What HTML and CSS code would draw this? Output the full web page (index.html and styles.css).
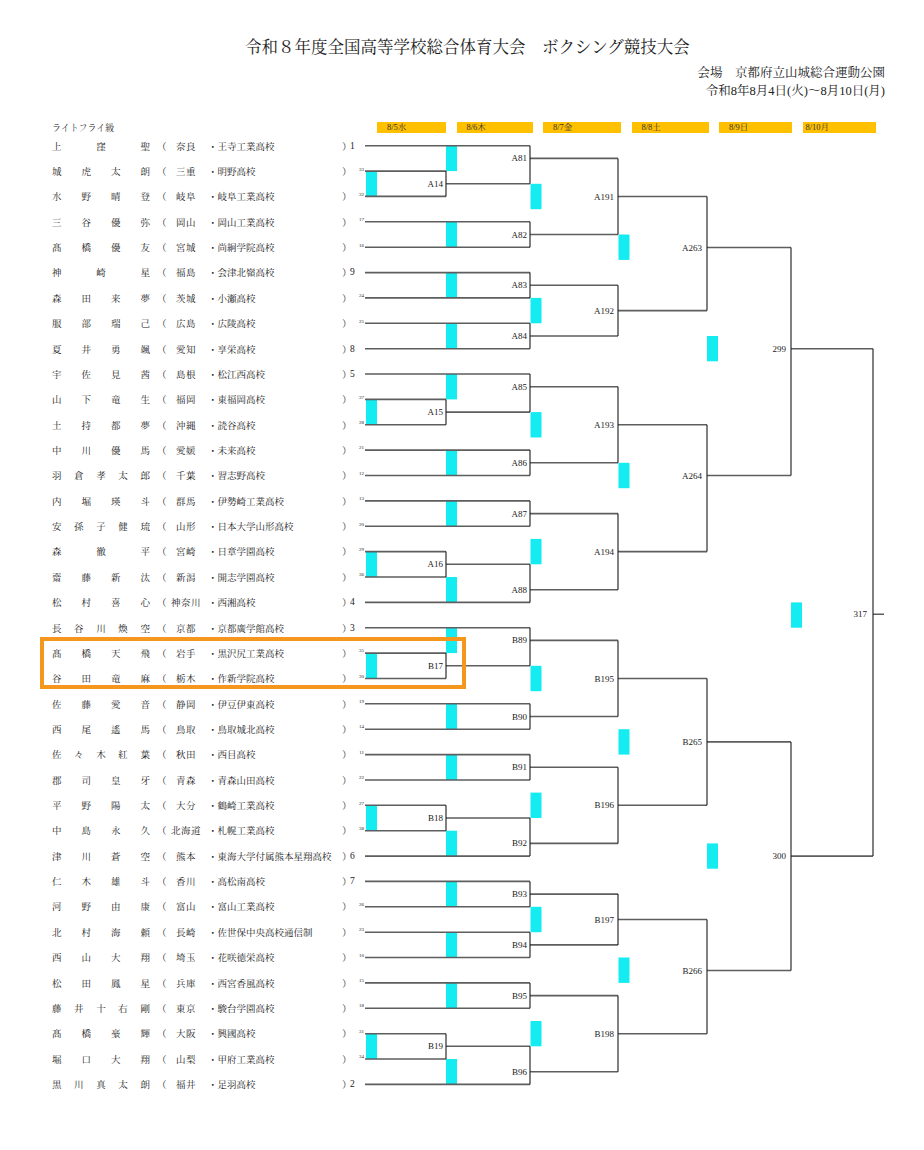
FILE: index.html
```html
<!DOCTYPE html>
<html lang="ja">
<head>
<meta charset="utf-8">
<title>ボクシング競技大会 ライトフライ級</title>
<link rel="stylesheet" href="styles.css">
</head>
<body>
<h1 class="title">令和８年度全国高等学校総合体育大会　ボクシング競技大会</h1>
<div class="venue">
  <div>会場　京都府立山城総合運動公園</div>
  <div>令和8年8月4日(火)～8月10日(月)</div>
</div>
<div class="head">
  <div class="cls">ライトフライ級</div>
  <div class="days">
    <div class="day">8/5水</div>
    <div class="day">8/6木</div>
    <div class="day">8/7金</div>
    <div class="day">8/8土</div>
    <div class="day">8/9日</div>
    <div class="day">8/10月</div>
  </div>
</div>
<div class="bracket">
  <div class="names">
    <div class="row"><span class="nm"><span>上</span><span>窪</span><span>聖</span></span><span class="po">（</span><span class="pf">奈良</span><span class="sc">・王寺工業高校</span><span class="pc">）</span><span class="sd">1</span></div>
    <div class="row"><span class="nm"><span>城</span><span>虎</span><span>太</span><span>朗</span></span><span class="po">（</span><span class="pf">三重</span><span class="sc">・明野高校</span><span class="pc">）</span><span class="sd sm">33</span></div>
    <div class="row"><span class="nm"><span>水</span><span>野</span><span>晴</span><span>登</span></span><span class="po">（</span><span class="pf">岐阜</span><span class="sc">・岐阜工業高校</span><span class="pc">）</span><span class="sd sm">32</span></div>
    <div class="row"><span class="nm"><span>三</span><span>谷</span><span>優</span><span>弥</span></span><span class="po">（</span><span class="pf">岡山</span><span class="sc">・岡山工業高校</span><span class="pc">）</span><span class="sd sm">17</span></div>
    <div class="row"><span class="nm"><span>髙</span><span>橋</span><span>優</span><span>友</span></span><span class="po">（</span><span class="pf">宮城</span><span class="sc">・尚絅学院高校</span><span class="pc">）</span><span class="sd sm">16</span></div>
    <div class="row"><span class="nm"><span>神</span><span>崎</span><span>星</span></span><span class="po">（</span><span class="pf">福島</span><span class="sc">・会津北嶺高校</span><span class="pc">）</span><span class="sd">9</span></div>
    <div class="row"><span class="nm"><span>森</span><span>田</span><span>来</span><span>夢</span></span><span class="po">（</span><span class="pf">茨城</span><span class="sc">・小瀬高校</span><span class="pc">）</span><span class="sd sm">24</span></div>
    <div class="row"><span class="nm"><span>服</span><span>部</span><span>瑞</span><span>己</span></span><span class="po">（</span><span class="pf">広島</span><span class="sc">・広陵高校</span><span class="pc">）</span><span class="sd sm">25</span></div>
    <div class="row"><span class="nm"><span>夏</span><span>井</span><span>勇</span><span>颯</span></span><span class="po">（</span><span class="pf">愛知</span><span class="sc">・享栄高校</span><span class="pc">）</span><span class="sd">8</span></div>
    <div class="row"><span class="nm"><span>宇</span><span>佐</span><span>見</span><span>茜</span></span><span class="po">（</span><span class="pf">島根</span><span class="sc">・松江西高校</span><span class="pc">）</span><span class="sd">5</span></div>
    <div class="row"><span class="nm"><span>山</span><span>下</span><span>竜</span><span>生</span></span><span class="po">（</span><span class="pf">福岡</span><span class="sc">・東福岡高校</span><span class="pc">）</span><span class="sd sm">37</span></div>
    <div class="row"><span class="nm"><span>土</span><span>持</span><span>都</span><span>夢</span></span><span class="po">（</span><span class="pf">沖縄</span><span class="sc">・読谷高校</span><span class="pc">）</span><span class="sd sm">28</span></div>
    <div class="row"><span class="nm"><span>中</span><span>川</span><span>優</span><span>馬</span></span><span class="po">（</span><span class="pf">愛媛</span><span class="sc">・未来高校</span><span class="pc">）</span><span class="sd sm">21</span></div>
    <div class="row"><span class="nm"><span>羽</span><span>倉</span><span>孝</span><span>太</span><span>郎</span></span><span class="po">（</span><span class="pf">千葉</span><span class="sc">・習志野高校</span><span class="pc">）</span><span class="sd sm">12</span></div>
    <div class="row"><span class="nm"><span>内</span><span>堀</span><span>瑛</span><span>斗</span></span><span class="po">（</span><span class="pf">群馬</span><span class="sc">・伊勢崎工業高校</span><span class="pc">）</span><span class="sd sm">13</span></div>
    <div class="row"><span class="nm"><span>安</span><span>孫</span><span>子</span><span>健</span><span>琉</span></span><span class="po">（</span><span class="pf">山形</span><span class="sc">・日本大学山形高校</span><span class="pc">）</span><span class="sd sm">20</span></div>
    <div class="row"><span class="nm"><span>森</span><span>徹</span><span>平</span></span><span class="po">（</span><span class="pf">宮崎</span><span class="sc">・日章学園高校</span><span class="pc">）</span><span class="sd sm">29</span></div>
    <div class="row"><span class="nm"><span>齋</span><span>藤</span><span>新</span><span>汰</span></span><span class="po">（</span><span class="pf">新潟</span><span class="sc">・開志学園高校</span><span class="pc">）</span><span class="sd sm">36</span></div>
    <div class="row"><span class="nm"><span>松</span><span>村</span><span>喜</span><span>心</span></span><span class="po">（</span><span class="pf">神奈川</span><span class="sc">・西湘高校</span><span class="pc">）</span><span class="sd">4</span></div>
    <div class="row"><span class="nm"><span>長</span><span>谷</span><span>川</span><span>煥</span><span>空</span></span><span class="po">（</span><span class="pf">京都</span><span class="sc">・京都廣学館高校</span><span class="pc">）</span><span class="sd">3</span></div>
    <div class="row"><span class="nm"><span>髙</span><span>橋</span><span>天</span><span>飛</span></span><span class="po">（</span><span class="pf">岩手</span><span class="sc">・黒沢尻工業高校</span><span class="pc">）</span><span class="sd sm">35</span></div>
    <div class="row"><span class="nm"><span>谷</span><span>田</span><span>竜</span><span>麻</span></span><span class="po">（</span><span class="pf">栃木</span><span class="sc">・作新学院高校</span><span class="pc">）</span><span class="sd sm">30</span></div>
    <div class="row"><span class="nm"><span>佐</span><span>藤</span><span>愛</span><span>音</span></span><span class="po">（</span><span class="pf">静岡</span><span class="sc">・伊豆伊東高校</span><span class="pc">）</span><span class="sd sm">19</span></div>
    <div class="row"><span class="nm"><span>西</span><span>尾</span><span>遙</span><span>馬</span></span><span class="po">（</span><span class="pf">鳥取</span><span class="sc">・鳥取城北高校</span><span class="pc">）</span><span class="sd sm">14</span></div>
    <div class="row"><span class="nm"><span>佐</span><span>々</span><span>木</span><span>紅</span><span>葉</span></span><span class="po">（</span><span class="pf">秋田</span><span class="sc">・西目高校</span><span class="pc">）</span><span class="sd sm">11</span></div>
    <div class="row"><span class="nm"><span>郡</span><span>司</span><span>皇</span><span>牙</span></span><span class="po">（</span><span class="pf">青森</span><span class="sc">・青森山田高校</span><span class="pc">）</span><span class="sd sm">22</span></div>
    <div class="row"><span class="nm"><span>平</span><span>野</span><span>陽</span><span>太</span></span><span class="po">（</span><span class="pf">大分</span><span class="sc">・鶴崎工業高校</span><span class="pc">）</span><span class="sd sm">27</span></div>
    <div class="row"><span class="nm"><span>中</span><span>島</span><span>永</span><span>久</span></span><span class="po">（</span><span class="pf">北海道</span><span class="sc">・札幌工業高校</span><span class="pc">）</span><span class="sd sm">38</span></div>
    <div class="row"><span class="nm"><span>津</span><span>川</span><span>蒼</span><span>空</span></span><span class="po">（</span><span class="pf">熊本</span><span class="sc">・東海大学付属熊本星翔高校</span><span class="pc">）</span><span class="sd">6</span></div>
    <div class="row"><span class="nm"><span>仁</span><span>木</span><span>雄</span><span>斗</span></span><span class="po">（</span><span class="pf">香川</span><span class="sc">・高松南高校</span><span class="pc">）</span><span class="sd">7</span></div>
    <div class="row"><span class="nm"><span>河</span><span>野</span><span>由</span><span>康</span></span><span class="po">（</span><span class="pf">富山</span><span class="sc">・富山工業高校</span><span class="pc">）</span><span class="sd sm">26</span></div>
    <div class="row"><span class="nm"><span>北</span><span>村</span><span>海</span><span>頼</span></span><span class="po">（</span><span class="pf">長崎</span><span class="sc">・佐世保中央高校通信制</span><span class="pc">）</span><span class="sd sm">23</span></div>
    <div class="row"><span class="nm"><span>西</span><span>山</span><span>大</span><span>翔</span></span><span class="po">（</span><span class="pf">埼玉</span><span class="sc">・花咲徳栄高校</span><span class="pc">）</span><span class="sd sm">10</span></div>
    <div class="row"><span class="nm"><span>松</span><span>田</span><span>鳳</span><span>星</span></span><span class="po">（</span><span class="pf">兵庫</span><span class="sc">・西宮香風高校</span><span class="pc">）</span><span class="sd sm">15</span></div>
    <div class="row"><span class="nm"><span>藤</span><span>井</span><span>十</span><span>右</span><span>剛</span></span><span class="po">（</span><span class="pf">東京</span><span class="sc">・駿台学園高校</span><span class="pc">）</span><span class="sd sm">18</span></div>
    <div class="row"><span class="nm"><span>髙</span><span>橋</span><span>豪</span><span>輝</span></span><span class="po">（</span><span class="pf">大阪</span><span class="sc">・興國高校</span><span class="pc">）</span><span class="sd sm">31</span></div>
    <div class="row"><span class="nm"><span>堀</span><span>口</span><span>大</span><span>翔</span></span><span class="po">（</span><span class="pf">山梨</span><span class="sc">・甲府工業高校</span><span class="pc">）</span><span class="sd sm">34</span></div>
    <div class="row"><span class="nm"><span>黒</span><span>川</span><span>真</span><span>太</span><span>朗</span></span><span class="po">（</span><span class="pf">福井</span><span class="sc">・足羽高校</span><span class="pc">）</span><span class="sd">2</span></div>
  </div>
  <svg class="tree" width="559" height="964" viewBox="365 133 559 964" xmlns="http://www.w3.org/2000/svg">
    <g class="c">
      <rect x="366" y="171.1" width="11" height="25.3"/>
      <rect x="366" y="399.4" width="11" height="25.4"/>
      <rect x="366" y="551.6" width="11" height="25.4"/>
      <rect x="366" y="653.1" width="11" height="25.4"/>
      <rect x="366" y="805.3" width="11" height="25.4"/>
      <rect x="366" y="1033.7" width="11" height="25.3"/>
      <rect x="446" y="145.7" width="11" height="25.4"/>
      <rect x="446" y="221.8" width="11" height="25.4"/>
      <rect x="446" y="272.6" width="11" height="25.3"/>
      <rect x="446" y="323.3" width="11" height="25.4"/>
      <rect x="446" y="374" width="11" height="25.4"/>
      <rect x="446" y="450.1" width="11" height="25.4"/>
      <rect x="446" y="500.9" width="11" height="25.4"/>
      <rect x="446" y="577" width="11" height="25.4"/>
      <rect x="446" y="627.7" width="11" height="25.4"/>
      <rect x="446" y="703.8" width="11" height="25.4"/>
      <rect x="446" y="754.6" width="11" height="25.4"/>
      <rect x="446" y="830.7" width="11" height="25.4"/>
      <rect x="446" y="881.4" width="11" height="25.4"/>
      <rect x="446" y="932.2" width="11" height="25.3"/>
      <rect x="446" y="982.9" width="11" height="25.4"/>
      <rect x="446" y="1059" width="11" height="25.4"/>
      <rect x="530.5" y="183.8" width="11" height="25.4"/>
      <rect x="530.5" y="297.9" width="11" height="25.4"/>
      <rect x="530.5" y="412.1" width="11" height="25.4"/>
      <rect x="530.5" y="538.9" width="11" height="25.4"/>
      <rect x="530.5" y="665.8" width="11" height="25.4"/>
      <rect x="530.5" y="792.6" width="11" height="25.4"/>
      <rect x="530.5" y="906.8" width="11" height="25.4"/>
      <rect x="530.5" y="1021" width="11" height="25.3"/>
      <rect x="618.5" y="234.5" width="11" height="25.4"/>
      <rect x="618.5" y="462.8" width="11" height="25.4"/>
      <rect x="618.5" y="729.2" width="11" height="25.4"/>
      <rect x="618.5" y="957.5" width="11" height="25.4"/>
      <rect x="707" y="336" width="11" height="25.3"/>
      <rect x="707" y="843.4" width="11" height="25.3"/>
      <rect x="791" y="602.4" width="11" height="25.3"/>
    </g>
    <path class="h" d="M365 145.7H530M365 221.8H530M365 247.2H530M365 272.6H530M365 297.9H530M365 323.3H530M365 348.7H530M365 374H530M365 450.1H530M365 475.5H530M365 500.9H530M365 526.3H530M365 602.4H530M365 627.7H530M365 703.8H530M365 729.2H530M365 754.6H530M365 780H530M365 856.1H530M365 881.4H530M365 906.8H530M365 932.2H530M365 957.5H530M365 982.9H530M365 1008.3H530M365 1084.4H530
      M365 171.1H446M365 196.4H446M365 399.4H446M365 424.8H446M365 551.6H446M365 577H446M365 653.1H446M365 678.5H446M365 805.3H446M365 830.7H446M365 1033.7H446M365 1059H446
      M446 183.8H530M446 412.1H530M446 564.3H530M446 665.8H530M446 818H530M446 1046.3H530
      M530 158.4H618M530 234.5H618M530 285.2H618M530 336H618M530 386.7H618M530 462.8H618M530 513.6H618M530 589.7H618M530 640.4H618M530 716.5H618M530 767.3H618M530 843.4H618M530 894.1H618M530 944.9H618M530 995.6H618M530 1071.7H618
      M618 196.5H707M618 310.6H707M618 424.8H707M618 551.6H707M618 678.5H707M618 805.3H707M618 919.5H707M618 1033.7H707
      M707 247.5H791M707 475.5H791M707 741.9H791M707 970.5H791
      M791 348.7H873M791 856.1H873
      M873 614.3H884"/>
    <path class="v" d="M446 171.1V196.4M446 399.4V424.8M446 551.6V577M446 653.1V678.5M446 805.3V830.7M446 1033.7V1059
      M530 145.7V183.8M530 221.8V247.2M530 272.6V297.9M530 323.3V348.7M530 374V412.1M530 450.1V475.5M530 500.9V526.3M530 564.3V602.4M530 627.7V665.8M530 703.8V729.2M530 754.6V780M530 818V856.1M530 881.4V906.8M530 932.2V957.5M530 982.9V1008.3M530 1046.3V1084.4
      M618 158.4V234.5M618 285.2V336M618 386.7V462.8M618 513.6V589.7M618 640.4V716.5M618 767.3V843.4M618 894.1V944.9M618 995.6V1071.7
      M707 196.5V310.6M707 424.8V551.6M707 678.5V805.3M707 919.5V1033.7
      M791 247.5V475.5M791 741.9V970.5
      M873 348.7V856.1"/>
    <g class="lb">
      <text x="443" y="183.8">A14</text>
      <text x="443" y="412.1">A15</text>
      <text x="443" y="564.3">A16</text>
      <text x="443" y="665.8">B17</text>
      <text x="443" y="818">B18</text>
      <text x="443" y="1046.3">B19</text>
      <text x="527" y="158.4">A81</text>
      <text x="527" y="234.5">A82</text>
      <text x="527" y="285.2">A83</text>
      <text x="527" y="336">A84</text>
      <text x="527" y="386.7">A85</text>
      <text x="527" y="462.8">A86</text>
      <text x="527" y="513.6">A87</text>
      <text x="527" y="589.7">A88</text>
      <text x="527" y="640.4">B89</text>
      <text x="527" y="716.5">B90</text>
      <text x="527" y="767.3">B91</text>
      <text x="527" y="843.4">B92</text>
      <text x="527" y="894.1">B93</text>
      <text x="527" y="944.9">B94</text>
      <text x="527" y="995.6">B95</text>
      <text x="527" y="1071.7">B96</text>
      <text x="614" y="196.5">A191</text>
      <text x="614" y="310.6">A192</text>
      <text x="614" y="424.8">A193</text>
      <text x="614" y="551.6">A194</text>
      <text x="614" y="678.5">B195</text>
      <text x="614" y="805.3">B196</text>
      <text x="614" y="919.5">B197</text>
      <text x="614" y="1033.7">B198</text>
      <text x="702" y="247.5">A263</text>
      <text x="702" y="475.5">A264</text>
      <text x="702" y="741.9">B265</text>
      <text x="702" y="970.5">B266</text>
      <text x="786" y="348.7">299</text>
      <text x="786" y="856.1">300</text>
      <text x="867" y="614.3">317</text>
    </g>
  </svg>
  <div class="hl"></div>
</div>
</body>
</html>
```
FILE: styles.css
```css
body {
  margin: 0;
  width: 924px;
  background: #fff;
  color: #222;
  font-family: "Liberation Serif", "Noto Serif CJK JP", "Noto Sans CJK JP", serif;
}

.title {
  margin: 0;
  padding: 38px 0 0 11px;
  font-size: 16.5px;
  line-height: 20px;
  font-weight: normal;
  text-align: center;
}

.venue {
  margin-top: 6px;
  padding-right: 39px;
  text-align: right;
  font-size: 12.5px;
  line-height: 18px;
}

.head {
  display: flex;
  align-items: center;
  height: 11px;
  margin-top: 22px;
}

.cls {
  width: 377px;
  box-sizing: border-box;
  padding-left: 52px;
  font-size: 9px;
  color: #333;
}

.days {
  display: grid;
  grid-template-columns: 69px 76px 78px 77px 73px 73px;
  column-gap: 10.5px;
}

.day {
  height: 11px;
  line-height: 11px;
  padding-left: 10px;
  background: #ffc000;
  font-size: 8.5px;
  color: #333;
}

.day:last-child {
  padding-left: 3px;
}

.bracket {
  position: relative;
  display: flex;
  align-items: flex-start;
}

.names {
  width: 365px;
  flex: none;
}

.row {
  display: flex;
  align-items: center;
  height: 25.37px;
  font-size: 9.5px;
  white-space: nowrap;
}

.nm {
  display: flex;
  justify-content: space-between;
  width: 98px;
  margin-left: 52px;
  flex: none;
}

.po {
  width: 9.5px;
  margin-left: 7px;
  flex: none;
}

.pf {
  width: 34px;
  margin-left: 2.5px;
  text-align: center;
  letter-spacing: 0.5px;
  flex: none;
}

.sc {
  width: 134px;
  margin-left: 5px;
  flex: none;
  overflow: visible;
}

.pc {
  width: 7px;
  flex: none;
}

.sd {
  display: flex;
  width: 16px;
  box-sizing: border-box;
  padding-left: 1px;
  flex: none;
}

.sd.sm {
  justify-content: flex-end;
  padding-left: 0;
  padding-right: 1px;
  margin-bottom: 4px;
  font-size: 5px;
}

.tree {
  display: block;
  flex: none;
}

.tree .c rect {
  fill: #14ecf2;
}

.tree .h {
  fill: none;
  stroke: #5e5e5e;
  stroke-width: 1.6;
}

.tree .v {
  fill: none;
  stroke: #1a1a1a;
  stroke-width: 1.1;
}

.tree .lb text {
  font-size: 9px;
  fill: #222;
  text-anchor: end;
  dominant-baseline: central;
}

.hl {
  position: absolute;
  left: 40px;
  top: 504px;
  width: 426px;
  height: 52px;
  box-sizing: border-box;
  border: 4px solid #f5961e;
}
```
